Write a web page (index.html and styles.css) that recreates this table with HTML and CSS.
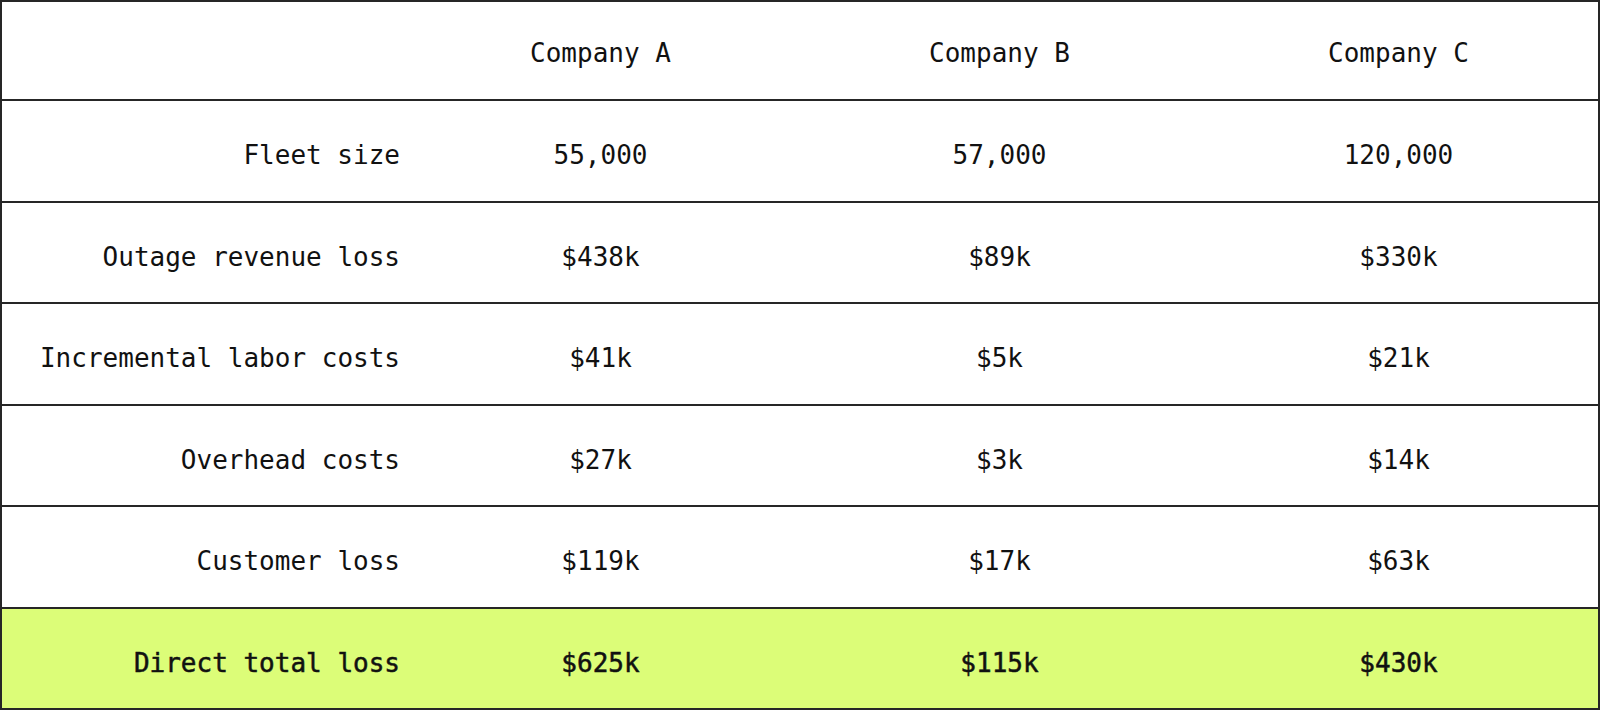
FILE: index.html
```html
<!DOCTYPE html>
<html lang="en">
<head>
<meta charset="utf-8">
<title>Direct loss comparison</title>
<link rel="stylesheet" href="styles.css">
</head>
<body>
<table class="loss-table">
  <thead>
    <tr>
      <th class="label"></th>
      <th>Company A</th>
      <th>Company B</th>
      <th>Company C</th>
    </tr>
  </thead>
  <tbody>
    <tr>
      <th class="label">Fleet size</th>
      <td>55,000</td>
      <td>57,000</td>
      <td>120,000</td>
    </tr>
    <tr>
      <th class="label">Outage revenue loss</th>
      <td>$438k</td>
      <td>$89k</td>
      <td>$330k</td>
    </tr>
    <tr>
      <th class="label">Incremental labor costs</th>
      <td>$41k</td>
      <td>$5k</td>
      <td>$21k</td>
    </tr>
    <tr>
      <th class="label">Overhead costs</th>
      <td>$27k</td>
      <td>$3k</td>
      <td>$14k</td>
    </tr>
    <tr>
      <th class="label">Customer loss</th>
      <td>$119k</td>
      <td>$17k</td>
      <td>$63k</td>
    </tr>
    <tr class="total">
      <th class="label">Direct total loss</th>
      <td>$625k</td>
      <td>$115k</td>
      <td>$430k</td>
    </tr>
  </tbody>
</table>
</body>
</html>
```

FILE: styles.css
```css
html, body {
  margin: 0;
  padding: 0;
  background: #ffffff;
}

.loss-table {
  width: 1600px;
  border-collapse: separate;
  border-spacing: 0;
  border: 2px solid #262626;
  box-sizing: border-box;
  table-layout: fixed;
  font-family: "DejaVu Sans Mono", "Liberation Mono", monospace;
  font-size: 26px;
  color: #111111;
}

.loss-table th,
.loss-table td {
  box-sizing: border-box;
  width: 25%;
  height: 99px;
  padding: 4px 0 0;
  text-align: center;
  vertical-align: middle;
  font-weight: normal;
  border-bottom: 2px solid #262626;
}

.loss-table tbody th,
.loss-table tbody td {
  padding-top: 8px;
}

.loss-table tbody tr:nth-child(odd) th,
.loss-table tbody tr:nth-child(odd) td {
  height: 102px;
}

.loss-table tbody tr:nth-child(even) th,
.loss-table tbody tr:nth-child(even) td {
  height: 101px;
}

.loss-table tbody tr.total th,
.loss-table tbody tr.total td {
  height: 99px;
  border-bottom: none;
  background: #dcfd78;
  -webkit-text-stroke: 0.5px #111111;
}

.loss-table .label {
  text-align: right;
  padding-right: 1px;
}
```
